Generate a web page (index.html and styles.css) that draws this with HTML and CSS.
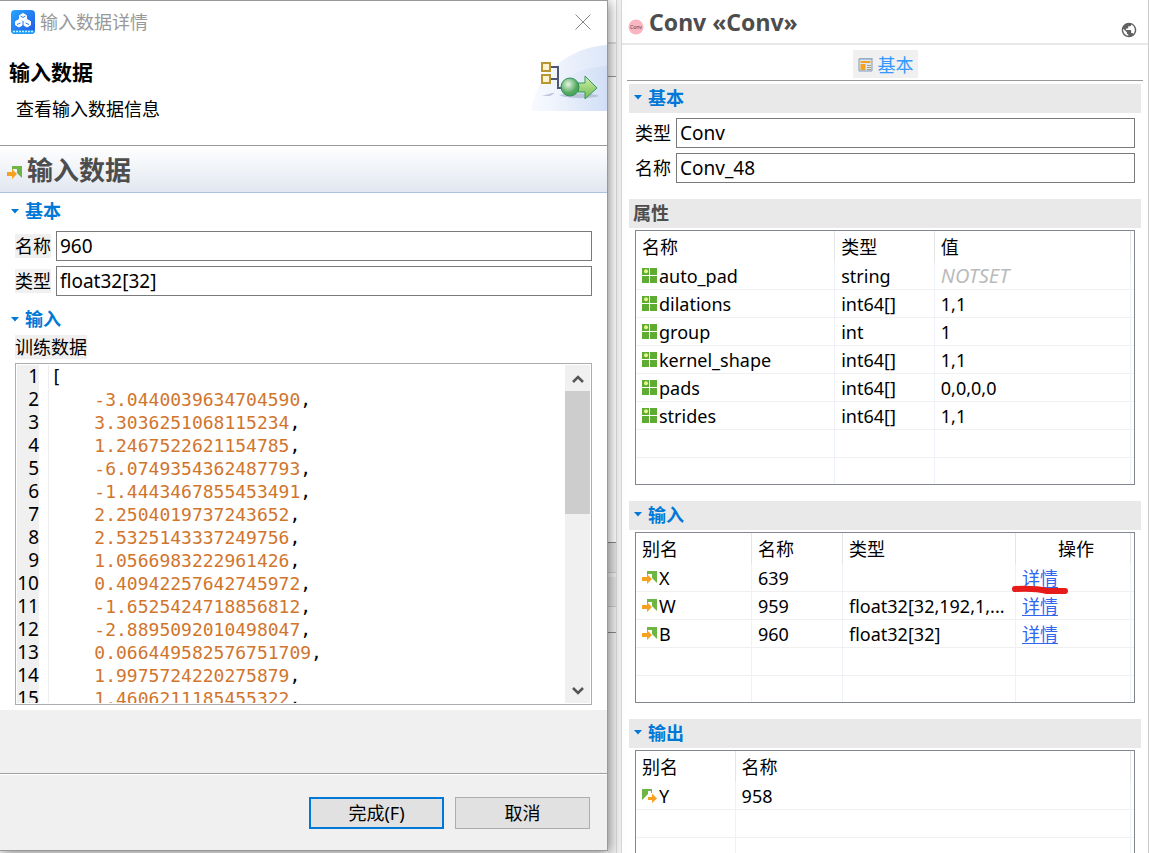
FILE: index.html
```html
<!DOCTYPE html>
<html lang="zh-CN">
<head>
<meta charset="utf-8">
<title>输入数据详情</title>
<link rel="stylesheet" href="styles.css">
</head>
<body>
<svg class="defs" aria-hidden="true">
  <symbol id="i-in" viewBox="0 0 16 14"><path d="M5 0h10v12l-5-5V3H6v2H5z" fill="#6db544"/><path d="M0 6h5V3l5 5-5 5v-3H0z" fill="#f5a122"/></symbol>
  <symbol id="i-out" viewBox="0 0 16 14"><path d="M0 0h10v4H9V2H6v3L0 11z" fill="#6db544"/><path d="M6 8h4V4.500l5 5-5 4.500v-3H6z" fill="#f5a122"/></symbol>
  <symbol id="i-attr" viewBox="0 0 15 15"><path d="M0 0h7v7H0zM8 0h7v7H8zM0 8h7v7H0zM8 8h7v7H8z" fill="#5fac33"/><circle cx="4" cy="3.200" r="2" fill="#eaf590"/></symbol>
  <symbol id="i-tri" viewBox="0 0 8 5"><path d="M0 0h8L4 4.500z" fill="#0078d7"/></symbol>
</svg>
<div class="app">
  <section class="dialog">
    <header class="titlebar">
      <svg class="logo" viewBox="0 0 24 24">
        <defs><linearGradient id="lg" x1="0" y1="0" x2="1" y2="1"><stop offset="0" stop-color="#27a6ff"/><stop offset="1" stop-color="#2457e4"/></linearGradient></defs>
        <rect width="24" height="24" rx="4" fill="url(#lg)"/>
        <path d="M0 20h24a4 4 0 0 1-4 4H4a4 4 0 0 1-4-4z" fill="#1d9cf5"/>
        <g fill="#fff" stroke="#fff" stroke-linejoin="round"><path d="M8.500 5.500l3.500-2 3.500 2v3.500l-3.500 2-3.500-2zM4.500 11.500l3.500-2 3.500 2V15L8 17l-3.500-2zM12.500 11.500l3.500-2 3.500 2V15L16 17l-3.500-2z"/></g>
        <g fill="none" stroke="#2b7df0"><path d="M9.500 6L12 7.500 14.500 6M6 14.500L9.500 13M18 14.500L14.500 13M12 11v6"/></g>
        <path d="M2 21.500h20" stroke="#c6eaff" stroke-width="1.500" stroke-dasharray="2 1"/>
      </svg>
      <span class="caption">输入数据详情</span>
      <button class="close" aria-label="关闭"><svg viewBox="0 0 16 16"><path d="M.5.5l15 15M15.500.5l-15 15" stroke="#888" fill="none"/></svg></button>
    </header>
    <div class="banner">
      <div class="banner-text">
        <h1>输入数据</h1>
        <p>查看输入数据信息</p>
      </div>
      <svg class="banner-art" viewBox="0 0 76 66">
        <defs>
          <linearGradient id="sky" x1="0" x2="1"><stop offset="0" stop-color="#f8faff"/><stop offset="1" stop-color="#dde7f8"/></linearGradient>
          <radialGradient id="ball" cx=".4" cy=".35"><stop offset="0" stop-color="#e4f6e1"/><stop offset="1" stop-color="#4fa55c"/></radialGradient>
          <linearGradient id="arr" x1="0" y1="0" x2="0" y2="1"><stop offset="0" stop-color="#d5f0ac"/><stop offset="1" stop-color="#6fba51"/></linearGradient>
          <linearGradient id="hill" x1="0" x2="1"><stop offset="0" stop-color="#eef3fc"/><stop offset="1" stop-color="#cbdaf4"/></linearGradient>
        </defs>
        <path d="M0 66C4 30 38 2 76 0v66z" fill="url(#sky)"/>
        <path d="M25 42C36 29 55 22 76 21v45H25z" fill="url(#hill)" opacity=".7"/>
        <path d="M11 51l10-3h3l-5 3zM28 50c12-2 34-2 40 1-8 3-32 3-40-1z" fill="#a9b3cf" opacity=".7"/>
        <path d="M19 22h8v21h5M19 34h8" fill="none" stroke="#4d5870" stroke-width="2"/>
        <path d="M11 18h8v8h-8zM11 30h8v8h-8z" fill="#fdf3cf" stroke="#b9962f" stroke-width="2"/>
        <path d="M47 38h7V31l12 12-12 11v-7h-7z" fill="url(#arr)" stroke="#319a5d"/>
        <circle cx="39" cy="42" r="9" fill="url(#ball)" stroke="#2b8f58"/>
      </svg>
    </div>
    <div class="form-head"><svg class="port"><use href="#i-in"/></svg><h2>输入数据</h2></div>
    <div class="form">
      <h3 class="twistie"><svg><use href="#i-tri"/></svg>基本</h3>
      <div class="field"><label for="d-name">名称</label><input id="d-name" value="960"></div>
      <div class="field"><label for="d-type">类型</label><input id="d-type" value="float32[32]"></div>
      <h3 class="twistie second">
        <svg><use href="#i-tri"/></svg>输入</h3>
      <div class="data-label"><span>训练数据</span></div>
      <div class="editor">
        <div class="lines">
          <div class="line"><i>1</i><code>[</code></div>
          <div class="line"><i>2</i><code>    <b>-3.0440039634704590</b>,</code></div>
          <div class="line"><i>3</i><code>    <b>3.3036251068115234</b>,</code></div>
          <div class="line"><i>4</i><code>    <b>1.2467522621154785</b>,</code></div>
          <div class="line"><i>5</i><code>    <b>-6.0749354362487793</b>,</code></div>
          <div class="line"><i>6</i><code>    <b>-1.4443467855453491</b>,</code></div>
          <div class="line"><i>7</i><code>    <b>2.2504019737243652</b>,</code></div>
          <div class="line"><i>8</i><code>    <b>2.5325143337249756</b>,</code></div>
          <div class="line"><i>9</i><code>    <b>1.0566983222961426</b>,</code></div>
          <div class="line"><i>10</i><code>    <b>0.40942257642745972</b>,</code></div>
          <div class="line"><i>11</i><code>    <b>-1.6525424718856812</b>,</code></div>
          <div class="line"><i>12</i><code>    <b>-2.8895092010498047</b>,</code></div>
          <div class="line"><i>13</i><code>    <b>0.066449582576751709</b>,</code></div>
          <div class="line"><i>14</i><code>    <b>1.9975724220275879</b>,</code></div>
          <div class="line"><i>15</i><code>    <b>1.4606211185455322</b>,</code></div>
        </div>
        <div class="scrollbar">
          <button aria-label="向上滚动"><svg viewBox="0 0 12 8"><path d="M1 7l5-5 5 5" fill="none" stroke="#555" stroke-width="2.500"/></svg></button>
          <div class="track"><div class="thumb"></div></div>
          <button aria-label="向下滚动"><svg viewBox="0 0 12 8"><path d="M1 1l5 5 5-5" fill="none" stroke="#555" stroke-width="2.500"/></svg></button>
        </div>
      </div>
    </div>
    <div class="spacer"></div>
    <footer class="actions"><button class="primary">完成(F)</button><button>取消</button></footer>
  </section>

  <div class="behind"><div class="b-top"></div><div class="b-tabs"></div><div class="b-canvas"></div><div class="b-bar"></div><div class="b-gap"></div><div class="b-bar"></div><div class="b-white"></div><div class="b-rest"></div></div>
  <div class="sash"></div>

  <section class="panel">
    <header class="panel-head">
      <svg class="conv" viewBox="0 0 16 16"><circle cx="8" cy="8" r="7.500" fill="#fbb4c2"/><text x="8" y="10" text-anchor="middle" class="conv-text">Conv</text></svg>
      <h2>Conv «Conv»</h2>
      <svg class="globe" viewBox="1 1 22 22"><path d="M12 2C6.480 2 2 6.480 2 12s4.480 10 10 10 10-4.480 10-10S17.520 2 12 2zm-1 17.930c-3.950-.49-7-3.850-7-7.930 0-.62.08-1.210.21-1.790L9 15v1c0 1.100.9 2 2 2v1.930zm6.900-2.540c-.26-.81-1-1.390-1.900-1.390h-1v-3c0-.55-.45-1-1-1H8v-2h2c.55 0 1-.45 1-1V7h2c1.100 0 2-.9 2-2v-.41c2.930 1.190 5 4.060 5 7.410 0 2.080-.8 3.970-2.100 5.390z" fill="#616161"/></svg>
    </header>
    <nav class="tabs"><button>
      <svg viewBox="0 0 15 15"><path d="M1 2h13v12H1z" fill="#dbe8f5" stroke="#8199b5"/><path d="M1.500 1.500h13" stroke="#8199b5" stroke-dasharray="1 1"/><path d="M2.500 4h10v2h-10zM2.500 7h5v6h-5z" fill="#f5a122"/><path d="M9 8.500h4M9 10.500h4M9 12.500h4" stroke="#a99d7a"/></svg>基本</button></nav>
    <div class="content">
      <h3 class="bar twistie"><svg><use href="#i-tri"/></svg>基本</h3>
      <div class="fields">
        <div class="field"><label for="p-type">类型</label><input id="p-type" value="Conv"></div>
        <div class="field"><label for="p-name">名称</label><input id="p-name" value="Conv_48"></div>
      </div>
      <h3 class="bar plain">属性</h3>
      <div class="box">
        <table>
          <colgroup><col class="a1"><col class="a2"><col><col class="end"></colgroup>
          <thead><tr><th>名称</th><th>类型</th><th>值</th><th></th></tr></thead>
          <tbody>
            <tr><td><svg class="attr"><use href="#i-attr"/></svg>auto_pad</td><td>string</td><td class="unset">NOTSET</td><td></td></tr>
            <tr><td><svg class="attr"><use href="#i-attr"/></svg>dilations</td><td>int64[]</td><td>1,1</td><td></td></tr>
            <tr><td><svg class="attr"><use href="#i-attr"/></svg>group</td><td>int</td><td>1</td><td></td></tr>
            <tr><td><svg class="attr"><use href="#i-attr"/></svg>kernel_shape</td><td>int64[]</td><td>1,1</td><td></td></tr>
            <tr><td><svg class="attr"><use href="#i-attr"/></svg>pads</td><td>int64[]</td><td>0,0,0,0</td><td></td></tr>
            <tr><td><svg class="attr"><use href="#i-attr"/></svg>strides</td><td>int64[]</td><td>1,1</td><td></td></tr>
            <tr><td></td><td></td><td></td><td></td></tr>
            <tr class="last"><td></td><td></td><td></td><td></td></tr>
          </tbody>
        </table>
      </div>
      <h3 class="bar twistie"><svg><use href="#i-tri"/></svg>输入</h3>
      <div class="box">
        <table>
          <colgroup><col class="b1"><col class="b2"><col class="b3"><col><col class="end"></colgroup>
          <thead><tr><th>别名</th><th>名称</th><th>类型</th><th class="center">操作</th><th></th></tr></thead>
          <tbody>
            <tr><td><svg class="port"><use href="#i-in"/></svg>X</td><td>639</td><td></td><td class="marked"><a href="#x">详情</a><svg class="stroke" viewBox="0 0 58 10"><path d="M4 4C20 3 28 4 36 6L54 6" fill="none" stroke="#e81b1b" stroke-width="6" stroke-linecap="round" stroke-linejoin="round"/></svg></td><td></td></tr>
            <tr><td><svg class="port"><use href="#i-in"/></svg>W</td><td>959</td><td>float32[32,192,1,...</td><td><a href="#w">详情</a></td><td></td></tr>
            <tr><td><svg class="port"><use href="#i-in"/></svg>B</td><td>960</td><td>float32[32]</td><td><a href="#b">详情</a></td><td></td></tr>
            <tr><td></td><td></td><td></td><td></td><td></td></tr>
            <tr class="last"><td></td><td></td><td></td><td></td><td></td></tr>
          </tbody>
        </table>
      </div>
      <h3 class="bar twistie"><svg><use href="#i-tri"/></svg>输出</h3>
      <div class="box">
        <table>
          <colgroup><col class="c1"><col><col class="end"></colgroup>
          <thead><tr><th>别名</th><th>名称</th><th></th></tr></thead>
          <tbody>
            <tr><td><svg class="port"><use href="#i-out"/></svg>Y</td><td>958</td><td></td></tr>
            <tr><td></td><td></td><td></td></tr>
            <tr><td></td><td></td><td></td></tr>
            <tr class="last"><td></td><td></td><td></td></tr>
          </tbody>
        </table>
      </div>
    </div>
  </section>
</div>
</body>
</html>
```
FILE: styles.css
```css
* { box-sizing: border-box; }
body, h1, h2, h3, p { margin: 0; }
body {
  font: 18px/24px "Noto Sans", "Noto Sans CJK SC", sans-serif;
  color: #000;
  background: #fff;
}
button, input { font: inherit; color: inherit; }
button { cursor: pointer; }
svg { display: block; flex: none; }
.defs { position: absolute; width: 0; height: 0; }

.app {
  display: grid;
  grid-template-columns: minmax(0, 608fr) 8px 6px minmax(0, 527fr);
  grid-template-rows: minmax(0, 1fr);
  height: 100vh;
  overflow: hidden;
}

/* dialog */
.dialog {
  display: flex;
  flex-direction: column;
  background: #fff;
  border: 1px solid #999;
  border-left: 0;
  margin-bottom: 2px;
  box-shadow: 1px 2px 12px rgba(0, 0, 0, .5);
  z-index: 1;
}
.titlebar { display: flex; align-items: center; gap: 5px; height: 43px; padding: 0 16px 1px 11px; }
.logo { width: 24px; height: 24px; }
.caption { color: #999; flex: 1; }
.close { border: 0; background: none; padding: 0; }
.close svg { width: 16px; height: 16px; }
.banner {
  display: flex;
  justify-content: space-between;
  height: 102px;
  border-bottom: 1px solid #999;
}
.banner-text { padding: 13px 0 0 9px; }
.banner h1 { font-size: 21px; line-height: 30px; }
.banner p { padding: 10px 0 0 7px; }
.banner-art { width: 76px; height: 66px; margin-top: 1px; }
.form-head {
  display: flex;
  align-items: center;
  gap: 4px;
  height: 47px;
  padding: 2px 0 0 7px;
  background: linear-gradient(#fff, #e1e7f1);
  border-bottom: 1px solid #a9c3de;
}
.form-head h2 { font-size: 26px; line-height: 36px; color: #4d4d4d; }
.form-head .port { margin-top: 6px; }
.port { width: 16px; height: 14px; }
.form {
  flex: 1;
  min-height: 0;
  display: flex;
  flex-direction: column;
  padding: 6px 15px 5px;
}
.twistie { display: flex; align-items: center; gap: 6px; font-size: 18px; color: #0078d7; }
.twistie svg { width: 8px; height: 5px; }
.form .twistie { margin-left: -4px; height: 24px; margin-bottom: 8px; }
.form .second { margin: 6px 0 4px -4px; }
.field { display: flex; align-items: center; gap: 5px; margin-bottom: 5px; }
.field label { line-height: 24px; }
.form .field label, .data-label span { background: #f0f0f0; }
.field input {
  flex: 1;
  min-width: 0;
  height: 30px;
  padding: 0 3px;
  border: 1px solid #7a7a7a;
  background: #fff;
}
.data-label { display: flex; margin-bottom: 4px; }
.editor { display: flex; flex: 1; min-height: 0; border: 1px solid #abadb3; padding: 1px; }
.lines { flex: 1; overflow: hidden; }
.line { display: grid; grid-template-columns: 22px 9px 1fr; height: 23px; line-height: 23px; }
.line i { font-style: normal; font-size: 19px; text-align: right; background: #f0f0f0; }
.line code {
  grid-column: 3;
  font-family: "DejaVu Sans Mono", monospace;
  font-size: 18px;
  white-space: pre;
  padding-left: 2px;
  border-left: 1px solid #eee;
}
.line b { font-weight: normal; color: #d1752d; }
.scrollbar { width: 25px; display: flex; flex-direction: column; background: #f0f0f0; }
.scrollbar button {
  height: 26px;
  padding: 2px 0 0;
  border: 0;
  background: none;
  display: flex;
  align-items: center;
  justify-content: center;
}
.scrollbar svg { width: 12px; height: 8px; }
.track { flex: 1; }
.thumb { height: 43%; background: #cdcdcd; }
.spacer { height: 63px; background: #f0f0f0; }
.actions {
  display: flex;
  justify-content: flex-end;
  gap: 11px;
  padding: 23px 17px 21px;
  background: #f0f0f0;
  border-top: 1px solid #a0a0a0;
  box-shadow: inset 0 1px #fff;
}
.actions button { width: 135px; height: 32px; padding: 0; border: 1px solid #adadad; background: #e1e1e1; }
.actions .primary { border: 2px solid #0078d7; }

/* editor area left visible beside the dialog */
.behind { display: flex; flex-direction: column; background: #f0f0f0; }
.b-top { height: 44px; background: #fff; border-bottom: 2px solid #ddd; }
.b-tabs { height: 33px; border-bottom: 1px solid #999; background: #f7f7f7; }
.b-canvas { height: 466px; background: #fff; border-bottom: 1px solid #888; }
.b-bar { height: 30px; background: #e4e4e4; border-bottom: 1px solid #ccc; }
.b-gap { height: 4px; }
.b-white { height: 26px; border-bottom: 1px solid #888; }
.b-rest { flex: 1; }
.sash { background: #f0f0f0; border: solid #d8d8d8; border-width: 0 1px; }

/* properties panel */
.panel { min-width: 0; border-right: 1px solid #ccc; background: #fff; overflow: hidden; }
.panel-head {
  display: flex;
  align-items: center;
  gap: 5px;
  height: 45px;
  padding: 0 11px 0 6px;
  border-bottom: 2px solid #e8e8e8;
}
.panel-head h2 { flex: 1; font-size: 23px; line-height: 32px; color: #4d4d4d; }
.conv { width: 16px; height: 16px; margin-top: 10px; }
.conv-text { font-size: 5px; fill: #444; }
.globe { width: 16px; height: 16px; margin-top: 16px; }
.tabs {
  display: flex;
  justify-content: center;
  margin: 0 5px;
  padding: 5px 0 2px;
  border-bottom: 1px solid #999;
}
.tabs button {
  display: flex;
  align-items: center;
  gap: 5px;
  height: 28px;
  padding: 1px 4px 0 5px;
  border: 0;
  background: #f0f0f0;
  color: #3399ff;
}
.tabs svg { width: 15px; height: 15px; }
.content { padding: 3px 7px 0; }
.bar { height: 29px; padding: 0 5px 2px; background: #e9e9e9; font-size: 18px; line-height: 28px; }
.plain { padding: 0 4px; color: #4d4d4d; }
.fields { padding: 5px 6px 11px; }
.field input { font-size: 19px; }
.box { margin: 2px 6px 16px; border: 1px solid #828790; }
table { width: 100%; table-layout: fixed; border-collapse: separate; border-spacing: 0; }
th, td { padding: 0 0 0 6px; text-align: left; white-space: nowrap; font-weight: normal; line-height: 24px; }
th { height: 31px; border-right: 1px solid #e5e5e5; }
td { height: 28px; border-right: 1px solid #edf1f8; border-bottom: 1px solid #f0f0f0; }
th:last-child, td:last-child { border-right: 0; padding: 0; }
.last td { height: 26px; border-bottom: 0; }
td svg { display: inline-block; }
.attr { width: 15px; height: 15px; margin-right: 2px; }
td .port { margin-right: 1px; }
.unset { color: #bbb; font-style: italic; font-size: 20px; }
.center { text-align: center; }
.a1 { width: 40%; }
.a2 { width: 20%; }
.b1 { width: 116px; }
.b2 { width: 91px; }
.b3 { width: 173px; }
.c1 { width: 20%; }
.end { width: 3px; }
a { color: #3366ee; text-decoration: underline; text-underline-offset: 2px; }
.marked { position: relative; }
.stroke { position: absolute; left: -5px; top: 21px; width: 58px; height: 10px; z-index: 1; }
```
